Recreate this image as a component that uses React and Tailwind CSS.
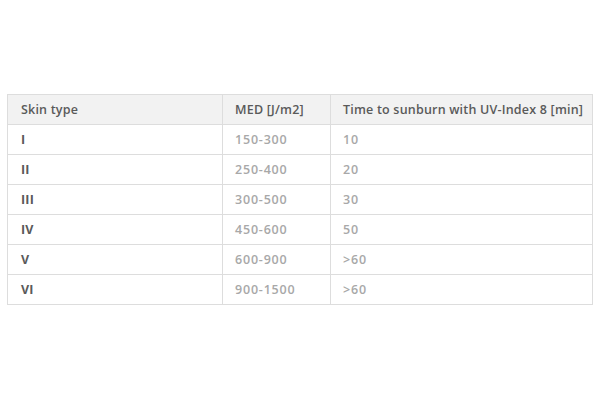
export default function App() {
  const rows = [
    ["I", "150-300", "10"],
    ["II", "250-400", "20"],
    ["III", "300-500", "30"],
    ["IV", "450-600", "50"],
    ["V", "600-900", ">60"],
    ["VI", "900-1500", ">60"],
  ];
  return (
    <div className="w-[600px] h-[400px] bg-white pt-[94px] pl-[7px]" style={{ fontFamily: '"Open Sans", sans-serif' }}>
      <table className="border-collapse table-fixed w-[585px] text-[12.5px] tracking-[0.2px] font-semibold">
        <colgroup>
          <col className="w-[215px]" />
          <col className="w-[108px]" />
          <col className="w-[262px]" />
        </colgroup>
        <thead>
          <tr className="bg-[#f2f2f2] h-[30px]">
            <th className="border border-[#dddddd] text-left pl-[13px] pt-[1px] font-semibold text-[#5a5a5a]">Skin type</th>
            <th className="border border-[#dddddd] text-left pl-[12px] pt-[1px] font-semibold text-[#5a5a5a]">MED [J/m2]</th>
            <th className="border border-[#dddddd] text-left pl-[12px] pt-[1px] font-semibold text-[#5a5a5a] whitespace-nowrap">Time to sunburn with UV-Index 8 [min]</th>
          </tr>
        </thead>
        <tbody>
          {rows.map((r) => (
            <tr key={r[0]} className="h-[30px]">
              <td className="border border-[#dddddd] pl-[13px] pt-[1px] font-bold text-[#5a5a5a]">{r[0]}</td>
              <td className="border border-[#dddddd] pl-[12px] pt-[1px] font-semibold text-[#a8a8a8] tracking-[0.8px]">{r[1]}</td>
              <td className="border border-[#dddddd] pl-[12px] pt-[1px] font-semibold text-[#a8a8a8] tracking-[0.8px]">{r[2]}</td>
            </tr>
          ))}
        </tbody>
      </table>
    </div>
  );
}
